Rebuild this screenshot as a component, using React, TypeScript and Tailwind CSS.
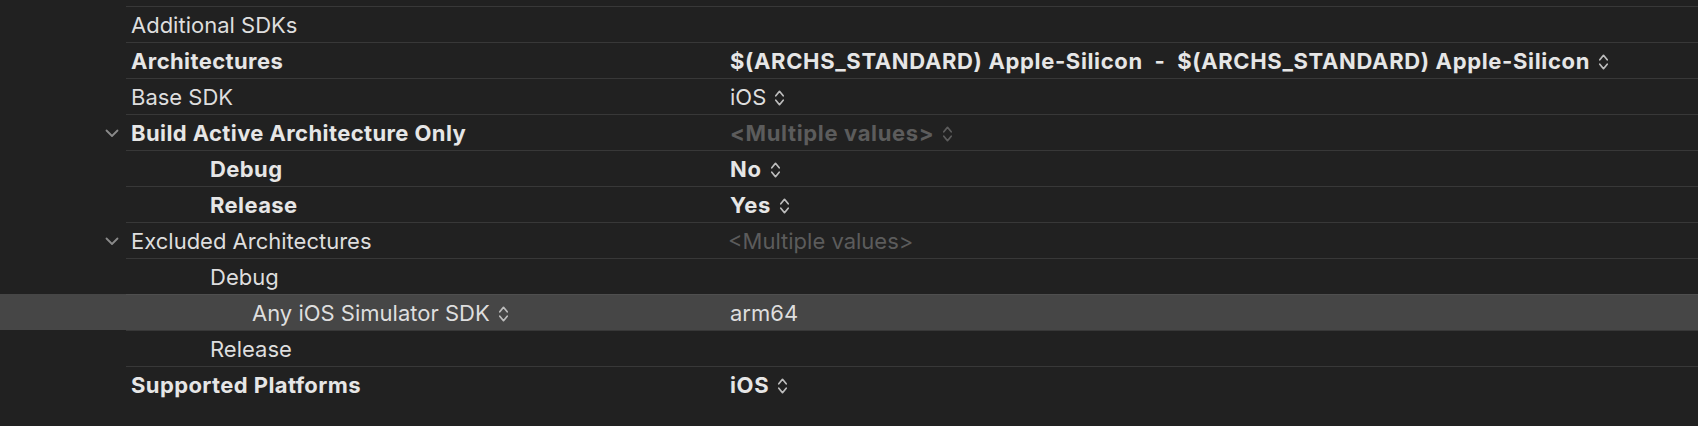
import React from "react";

type Row = {
  label: string;
  bold?: boolean;
  level?: number;
  disclosure?: boolean;
  labelPopup?: boolean;
  value?: string;
  valueBold?: boolean;
  valueMuted?: boolean;
  popup?: boolean;
  selected?: boolean;
};

const rows: Row[] = [
  { label: "Additional SDKs" },
  {
    label: "Architectures",
    bold: true,
    value: "$(ARCHS_STANDARD) Apple-Silicon\u00a0\u00a0-\u00a0\u00a0$(ARCHS_STANDARD) Apple-Silicon",
    valueBold: true,
    popup: true,
  },
  { label: "Base SDK", value: "iOS", popup: true },
  {
    label: "Build Active Architecture Only",
    bold: true,
    disclosure: true,
    value: "<Multiple values>",
    valueBold: true,
    valueMuted: true,
    popup: true,
  },
  { label: "Debug", bold: true, level: 1, value: "No", valueBold: true, popup: true },
  { label: "Release", bold: true, level: 1, value: "Yes", valueBold: true, popup: true },
  { label: "Excluded Architectures", disclosure: true, value: "<Multiple values>", valueMuted: true },
  { label: "Debug", level: 1 },
  { label: "Any iOS Simulator SDK", level: 2, labelPopup: true, value: "arm64", selected: true },
  { label: "Release", level: 1 },
  { label: "Supported Platforms", bold: true, value: "iOS", valueBold: true, popup: true },
];

function UpDown({ muted }: { muted?: boolean }) {
  return (
    <svg
      width="11"
      height="18"
      viewBox="0 0 11 18"
      className={muted ? "ml-[8px] text-[#5c5c5c]" : "ml-[8px] text-[#bdbdbd]"}
      fill="none"
      stroke="currentColor"
      strokeWidth="1.7"
      strokeLinecap="round"
      strokeLinejoin="round"
    >
      <path d="M1.8 6.8 L5.5 2.3 L9.2 6.8" />
      <path d="M1.8 11.2 L5.5 15.7 L9.2 11.2" />
    </svg>
  );
}

function Disclosure() {
  return (
    <svg width="14" height="9" viewBox="0 0 14 9" fill="none" stroke="#8a8a8a" strokeWidth="1.8" strokeLinecap="round" strokeLinejoin="round">
      <path d="M1.5 1.5 L7 7 L12.5 1.5" />
    </svg>
  );
}

const indent = ["pl-[5px]", "pl-[84px]", "pl-[126px]"];

export default function App() {
  return (
    <div
      className="w-[1698px] h-[426px] bg-[#212121] pt-[6px] overflow-hidden"
      style={{ fontFamily: "Inter, 'Liberation Sans', sans-serif" }}
    >
      {rows.map((r, i) => (
        <div key={i} className={`flex h-[36px] ${r.selected ? "bg-[#464646]" : ""}`}>
          <div className="w-[126px] flex items-center justify-end pr-[7px] pt-[3px]">
            {r.disclosure && <Disclosure />}
          </div>
          <div
            className={`flex-1 flex items-center pt-[2px] border-t ${
              r.selected ? "border-[#4f4f4f]" : "border-[#383838]"
            }`}
          >
            <div
              className={`w-[604px] flex items-center text-[22px] ${indent[r.level ?? 0]} ${
                r.bold ? "font-bold tracking-[0.4px] text-[#e6e6e6]" : "text-[#dedede]"
              }`}
            >
              <span>{r.label}</span>
              {r.labelPopup && <UpDown />}
            </div>
            {r.value && (
              <div
                className={`flex items-center text-[22px] ${r.valueBold ? "font-bold tracking-[0.65px]" : ""} ${
                  r.valueMuted ? "text-[#5c5c5c]" : r.valueBold ? "text-[#e6e6e6]" : "text-[#dedede]"
                } ${r.valueMuted && !r.valueBold ? "-ml-[2px]" : ""}`}
              >
                <span>{r.value}</span>
                {r.popup && <UpDown muted={r.valueMuted} />}
              </div>
            )}
          </div>
        </div>
      ))}
    </div>
  );
}
